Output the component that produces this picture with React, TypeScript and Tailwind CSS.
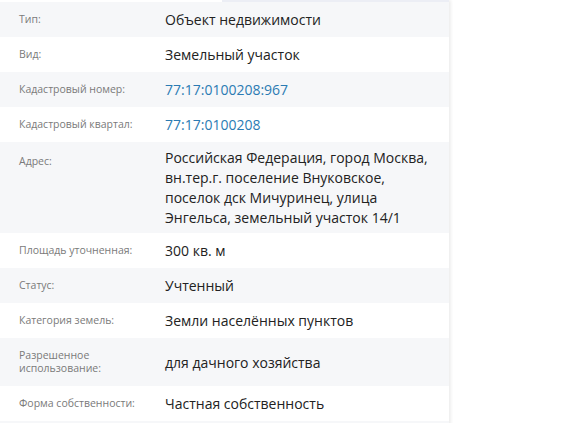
const rows: { label: string; value: React.ReactNode; link?: boolean; top?: boolean }[] = [
  { label: "Тип:", value: "Объект недвижимости" },
  { label: "Вид:", value: "Земельный участок" },
  { label: "Кадастровый номер:", value: "77:17:0100208:967", link: true },
  { label: "Кадастровый квартал:", value: "77:17:0100208", link: true },
  {
    label: "Адрес:",
    top: true,
    value: (
      <>
        Российская Федерация, город Москва,
        <br />
        вн.тер.г. поселение Внуковское,
        <br />
        поселок дск Мичуринец, улица
        <br />
        Энгельса, земельный участок 14/1
      </>
    ),
  },
  { label: "Площадь уточненная:", value: "300 кв. м" },
  { label: "Статус:", value: "Учтенный" },
  { label: "Категория земель:", value: "Земли населённых пунктов" },
  {
    label: "Разрешенное использование:",
    value: "для дачного хозяйства",
  },
  { label: "Форма собственности:", value: "Частная собственность" },
  { label: "", value: "" },
];

export default function App() {
  return (
    <div className="h-[423px] w-[573px] overflow-hidden bg-white font-['Open_Sans',sans-serif]">
      <div className="w-[449px] shadow-[2px_0_3px_rgba(0,0,0,0.07)]">
        {/* tab strip */}
        <div className="flex h-[2px]">
          <div className="w-[222px] bg-white" />
          <div className="flex-1 bg-[#eceef5]" />
        </div>
        {rows.map((r, i) => (
          <div
            key={i}
            className={`flex min-h-[35px] items-center ${i % 2 === 0 ? "bg-[#f6f7f9]" : "bg-white"}`}
          >
            <div
              className={`w-[165px] shrink-0 pl-[19px] pr-[6px] text-[10.5px] leading-[13px] text-[#7a7a7a] ${
                r.top ? "self-start pt-[13px]" : "py-[11px]"
              }`}
            >
              {r.label}
            </div>
            <div
              className={`flex-1 pt-[6px] pb-[5px] pr-3 text-[14px] leading-[20px] ${
                r.link ? "text-[#2b7bb3]" : "text-[#222222]"
              }`}
            >
              {r.value}
            </div>
          </div>
        ))}
      </div>
    </div>
  );
}
